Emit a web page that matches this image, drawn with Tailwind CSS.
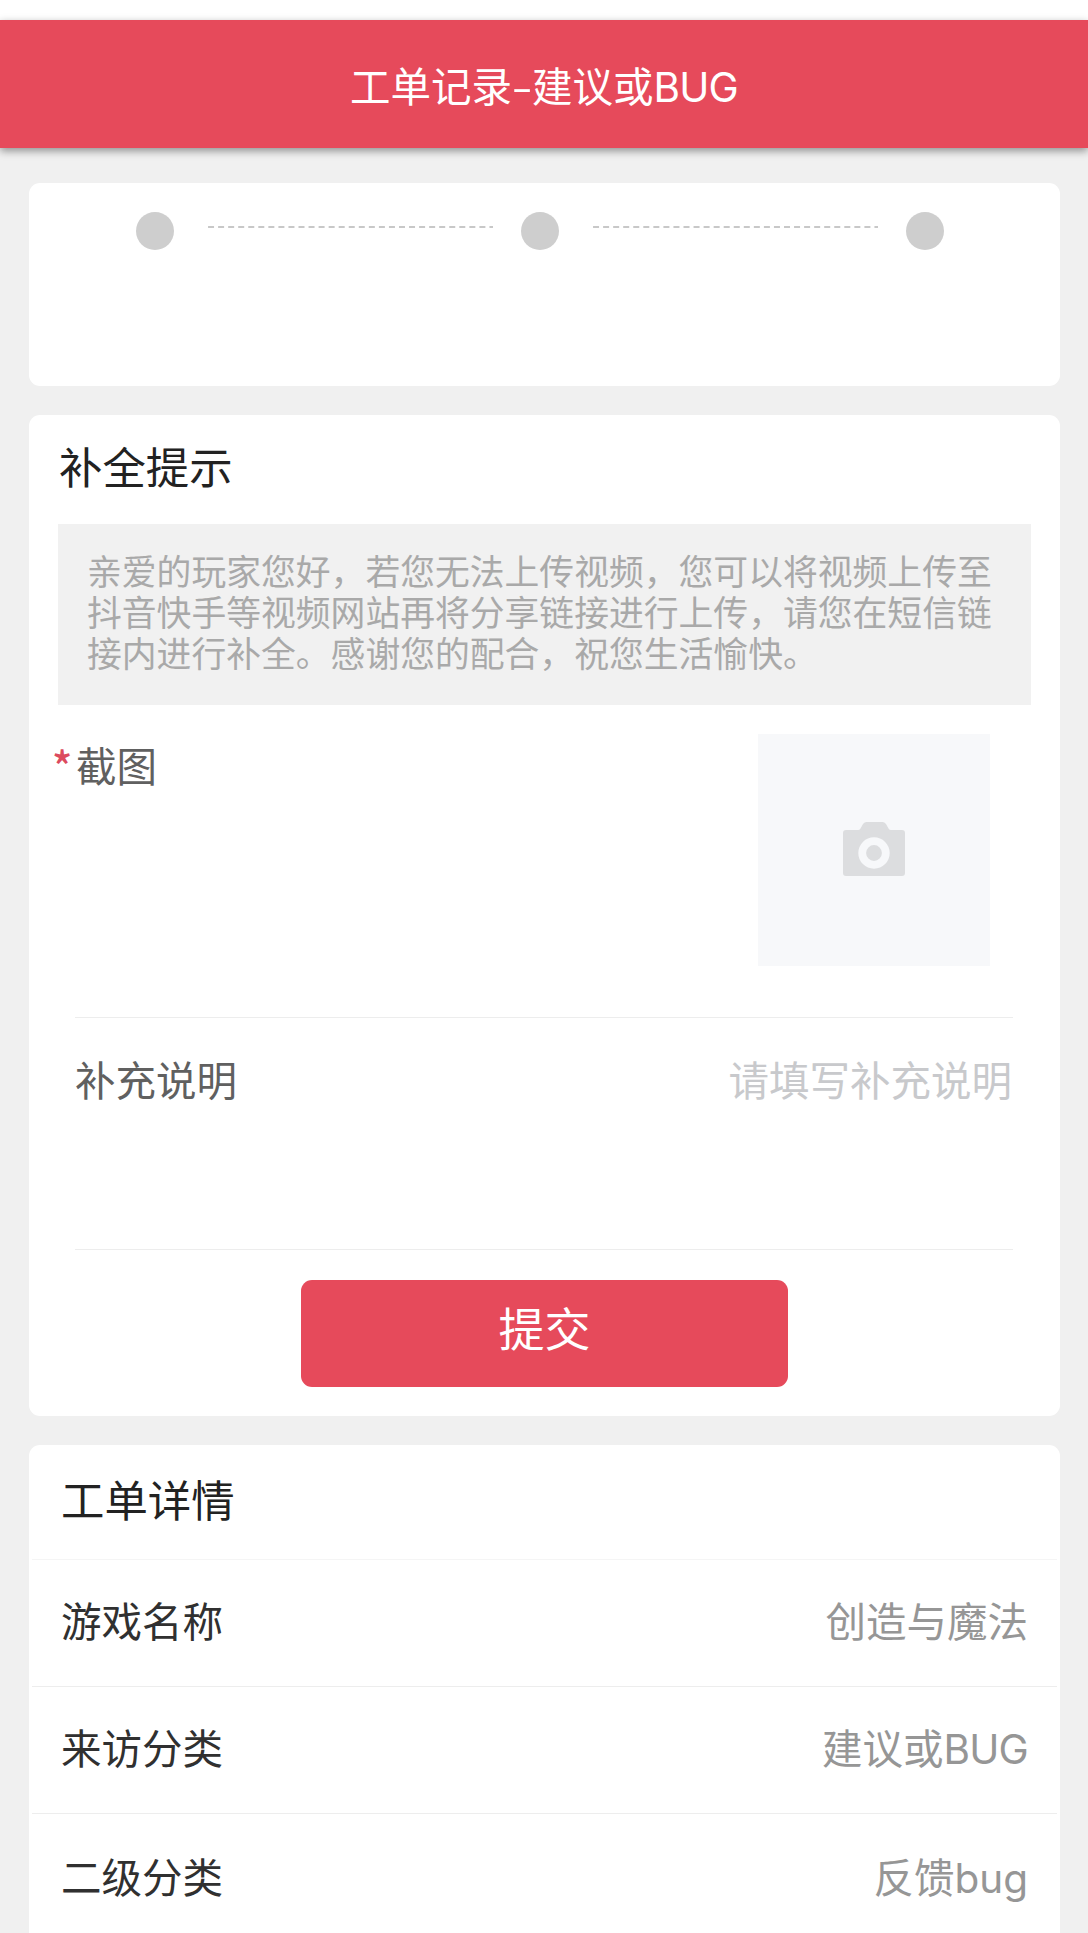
<!DOCTYPE html>
<html lang="zh-CN">

<head>
  <meta charset="UTF-8">
  <meta name="viewport" content="width=device-width, initial-scale=1">
  <title>工单记录</title>
  <script src="https://cdn.jsdelivr.net/npm/@tailwindcss/browser@4"></script>
</head>

<body class="h-[1933px] overflow-hidden bg-[#f0f0f0] font-['Noto_Sans_CJK_SC',sans-serif] text-[40.5px]">
  <div class="h-5 bg-white"></div>
  <header class="h-32 pt-[5px] bg-[#e64a5b] flex items-center justify-center shadow-[0_3px_8px_rgba(0,0,0,0.4)]">
    <h1 class="leading-none text-white">工单记录<span class="inline-block px-[3px] scale-x-150">-</span>建议或<span class="font-['Inter',sans-serif] tracking-[-0.8px]">BUG</span></h1>
  </header>

  <main class="pt-[35px] pl-[29px] pr-7 flex flex-col gap-[29px]">
    <!-- progress -->
    <section class="h-[203px] shrink-0 bg-white rounded-[11px] pt-[29px] pl-[107px] flex items-start">
      <div class="size-[38px] rounded-full bg-[#cecece]"></div>
      <svg class="ml-[30px] mr-7 mt-3.5" width="289" height="2"><path d="M0 1H289" stroke="#c8c8c8" stroke-width="2" stroke-dasharray="6 4.05" stroke-dashoffset="6"/></svg>
      <div class="size-[38px] rounded-full bg-[#cecece]"></div>
      <svg class="ml-[30px] mr-7 mt-3.5" width="289" height="2"><path d="M0 1H289" stroke="#c8c8c8" stroke-width="2" stroke-dasharray="6 4.05" stroke-dashoffset="6"/></svg>
      <div class="size-[38px] rounded-full bg-[#cecece]"></div>
    </section>

    <!-- form -->
    <section class="h-[1001px] shrink-0 bg-white rounded-[11px] px-[29px]">
      <h2 class="h-[109px] pt-7 pl-px text-[43.4px] leading-[44px] text-[#222]">补全提示</h2>
      <p class="h-[181px] bg-[#f1f1f1] px-[29px] pt-[26px] text-[34.8px] leading-[41px] text-[#a9a9a9] whitespace-nowrap">亲爱的玩家您好，若您无法上传视频，您可以将视频上传至<br>抖音快手等视频网站再将分享链接进行上传，请您在短信链<br>接内进行补全。感谢您的配合，祝您生活愉快。</p>
      <div class="ml-[17px] mr-[18px]">
        <div class="h-[313px] border-b-1 border-[#ededed] pt-[29px] pr-[23px] flex items-start justify-between">
          <label class="-ml-[23px] mt-[11px] leading-[40px] text-[#606060] flex"><span class="w-[24px] text-[42px] font-medium text-[#dc4a5e]">*</span>截图</label>
          <div class="size-[232px] pb-0.5 bg-[#f7f8fa] flex items-center justify-center">
            <svg width="62" height="54" viewBox="0 0 62 54">
              <path fill="#dcdddf" d="M3 8H15Q16.500 8 17.500 6.500L20 2Q21.500 0 23.500 0H39.500Q41.500 0 43 2L45.500 6.500Q46.500 8 48 8H59Q62 8 62 11V51Q62 54 59 54H3Q0 54 0 51V11Q0 8 3 8Z"/>
              <circle cx="31" cy="31" r="11.800" fill="none" stroke="#f7f8fa" stroke-width="7.800"/>
            </svg>
          </div>
        </div>
        <div class="h-[232px] border-b-1 border-[#ededed] pt-[41px] pr-px flex items-start justify-between leading-[40px]">
          <label class="text-[#606060]">补充说明</label>
          <span class="text-[#c8c9cc]">请填写补充说明</span>
        </div>
      </div>
      <button class="mt-[30px] mx-auto w-[487px] h-[107px] pb-[15px] rounded-[11px] bg-[#e64a5b] text-white text-[46px] leading-none flex items-center justify-center">提交</button>
    </section>

    <!-- details -->
    <section class="h-[520px] shrink-0 bg-white rounded-t-[11px] px-[3px]">
      <h2 class="h-[115px] border-b-1 border-[#f5f5f5] pl-[29px] pt-[31px] text-[43.4px] leading-[44px] text-[#222]">工单详情</h2>
      <div class="h-[127px] border-b-1 border-[#ededed] px-[29px] pb-[5px] flex items-center justify-between leading-none">
        <span class="text-[#303030]">游戏名称</span>
        <span class="text-[#969696]">创造与魔法</span>
      </div>
      <div class="h-[127px] border-b-1 border-[#ededed] px-[29px] pb-[5px] flex items-center justify-between leading-none">
        <span class="text-[#303030]">来访分类</span>
        <span class="pt-[3px] text-[#969696]">建议或<span class="font-['Inter',sans-serif] tracking-[-0.8px]">BUG</span></span>
      </div>
      <div class="h-[127px] px-[29px] pb-[3px] flex items-center justify-between leading-none">
        <span class="text-[#303030]">二级分类</span>
        <span class="pt-[3px] text-[#969696]">反馈<span class="font-['Inter',sans-serif]">bug</span></span>
      </div>
    </section>
  </main>
</body>

</html>
